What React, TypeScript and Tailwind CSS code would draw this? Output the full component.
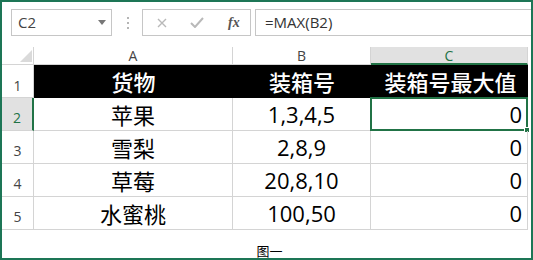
import React from 'react';

const cjk = "font-['Microsoft_YaHei','Noto_Sans_CJK_SC',sans-serif]";
const num = "font-['Open_Sans','Noto_Sans_CJK_SC',sans-serif]";

const rows = [
  { n: '1', a: '货物', b: '装箱号', c: '装箱号最大值', head: true },
  { n: '2', a: '苹果', b: '1,3,4,5', c: '0' },
  { n: '3', a: '雪梨', b: '2,8,9', c: '0' },
  { n: '4', a: '草莓', b: '20,8,10', c: '0' },
  { n: '5', a: '水蜜桃', b: '100,50', c: '0' },
];

function App() {
  return (
    <div className="w-[533px] h-[260px] border-2 border-[#1d7656] bg-white overflow-hidden font-['Open_Sans',sans-serif] text-[#333]">
      {/* formula bar */}
      <div className="h-[45px] flex items-start pt-[7px] pl-[9px]">
        <div className="w-[101px] h-[27px] border border-[#c6c6c6] flex items-center justify-between pl-[6px] pr-[5px]">
          <span className="text-[15px] leading-none text-[#444]">C2</span>
          <svg width="8" height="5" viewBox="0 0 8 5"><path d="M0 0h8L4 5z" fill="#777" /></svg>
        </div>
        <div className="ml-[15px] mt-[8px] flex flex-col gap-[3px]">
          <div className="w-[2px] h-[2px] bg-[#b5b5b5]" />
          <div className="w-[2px] h-[2px] bg-[#b5b5b5]" />
          <div className="w-[2px] h-[2px] bg-[#b5b5b5]" />
        </div>
        <div className="ml-[13px] w-[109px] h-[27px] border border-[#c6c6c6] flex items-center">
          <svg className="ml-[14px]" width="10" height="10" viewBox="0 0 10 10">
            <path d="M1 1l8 8M9 1l-8 8" stroke="#b9b9b9" strokeWidth="1.4" />
          </svg>
          <svg className="ml-[23px]" width="14" height="11" viewBox="0 0 14 11">
            <path d="M1 6l4 4L13 1" stroke="#b9b9b9" strokeWidth="2" fill="none" />
          </svg>
          <span className="ml-[24px] text-[14px] italic font-bold leading-none text-[#555] font-['Liberation_Serif',serif]">fx</span>
        </div>
        <div className="ml-[4px] flex-1 h-[27px] border border-r-0 border-[#c6c6c6] flex items-center pl-[9px]">
          <span className="text-[15px] leading-none text-[#333]">=MAX(B2)</span>
        </div>
      </div>

      {/* sheet */}
      <div className="grid grid-cols-[32px_199px_138px_157px]">
        <div className="h-[18px] border-r border-b border-[#d4d4d4] flex items-end justify-end pr-[1px] pb-[2px]">
          <svg width="12" height="12" viewBox="0 0 12 12"><path d="M12 0v12H0z" fill="#dadada" /></svg>
        </div>
        <div className="h-[18px] border-r border-b border-[#d4d4d4] flex items-center justify-center text-[14px] text-[#444]">A</div>
        <div className="h-[18px] border-r border-b border-[#d4d4d4] flex items-center justify-center text-[14px] text-[#444]">B</div>
        <div className="h-[18px] bg-[#e1e1e1] border-r border-[#d4d4d4] border-b-2 border-b-[#217346] flex items-center justify-center text-[14px] text-[#217346]">C</div>

        {rows.map((r) => (
          <React.Fragment key={r.n}>
            <div
              className={
                r.n === '2'
                  ? 'h-[33px] bg-[#e1e1e1] border-r-2 border-r-[#217346] border-b border-[#d4d4d4] flex items-center justify-center pt-[6px] text-[14px] text-[#217346]'
                  : r.head
                  ? 'h-[33px] border-r border-b border-[#d4d4d4] flex items-end justify-center pb-[1px] text-[14px] text-[#444]'
                  : 'h-[33px] border-r border-b border-[#d4d4d4] flex items-center justify-center pt-[6px] text-[14px] text-[#444]'
              }
            >
              {r.n}
            </div>
            {r.head ? (
              <>
                <div className={`h-[33px] bg-black text-white flex items-center justify-center text-[22px] font-medium ${cjk}`}>{r.a}</div>
                <div className={`h-[33px] bg-black text-white flex items-center justify-center text-[22px] font-medium ${cjk}`}>{r.b}</div>
                <div className={`h-[33px] bg-black text-white flex items-center justify-center pl-[2px] text-[22px] font-medium ${cjk}`}>{r.c}</div>
              </>
            ) : (
              <>
                <div className={`h-[33px] border-r border-b border-[#d4d4d4] flex items-center justify-center text-[22px] text-black ${cjk}`}>{r.a}</div>
                <div className={`h-[33px] border-r border-b border-[#d4d4d4] flex items-center justify-center text-[22px] text-black ${num}`}>{r.b}</div>
                <div className={`relative h-[33px] border-r border-b border-[#d4d4d4] flex items-center justify-end pr-[5px] text-[22px] text-black ${num}`}>
                  {r.c}
                  {r.n === '2' && (
                    <div className="absolute -left-[1px] -top-[1px] -right-[1px] -bottom-[1px] border-2 border-[#217346]">
                      <div className="absolute -right-[4px] -bottom-[4px] w-[6px] h-[6px] bg-[#217346] border border-white" />
                    </div>
                  )}
                </div>
              </>
            )}
          </React.Fragment>
        ))}
      </div>

      <div className="flex justify-center pl-[6px] pt-[14px]">
        <span className={`text-[13px] leading-none text-black ${cjk}`}>图一</span>
      </div>
    </div>
  );
}

export default App;
